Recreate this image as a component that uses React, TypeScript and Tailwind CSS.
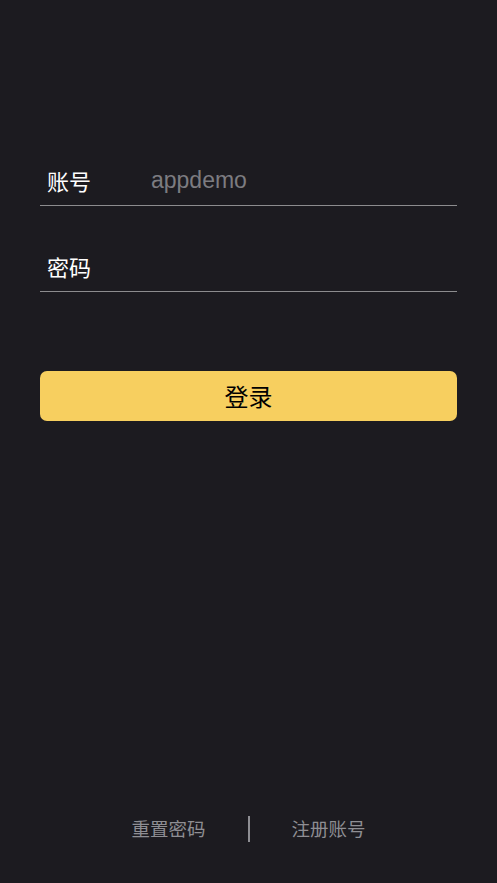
const cjk = { fontFamily: '"Noto Sans CJK SC", "Noto Sans", sans-serif' };

function Field({ label, placeholder }: { label: string; placeholder?: string }) {
  return (
    <div className="flex h-[46px] items-center border-b border-[#8c8c8e] pb-[4px]">
      <span className="w-[111px] pl-[7px] text-[22px] text-white" style={cjk}>
        {label}
      </span>
      {placeholder && (
        <span
          className="text-[23px] text-[#7c7c80]"
          style={{ fontFamily: '"Liberation Sans", Arial, sans-serif' }}
        >
          {placeholder}
        </span>
      )}
    </div>
  );
}

export default function App() {
  return (
    <div className="flex min-h-screen flex-col bg-[#1c1b20] px-10 pt-[160px] pb-[40px]">
      <div className="flex flex-col gap-10">
        <Field label="账号" placeholder="appdemo" />
        <Field label="密码" />
      </div>

      <button
        className="mt-[79px] flex h-[50px] items-center justify-center rounded-[7px] bg-[#f7cf5f] text-[24px] text-black"
        style={cjk}
      >
        登录
      </button>

      <div className="mt-auto flex items-center justify-center gap-[42px] text-[18.5px] text-[#8e8e93]" style={cjk}>
        <span>重置密码</span>
        <span className="h-[26px] w-[2px] bg-[#8e8e93]" />
        <span>注册账号</span>
      </div>
    </div>
  );
}
